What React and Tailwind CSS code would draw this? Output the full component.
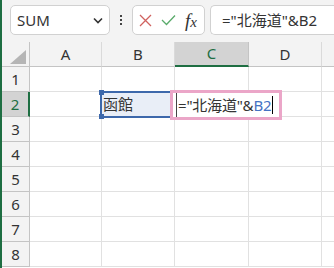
import React from "react";

const F = { fontFamily: '"Noto Sans", "Noto Sans CJK JP", sans-serif' };

function Toolbar() {
  return (
    <div className="h-[42px] flex items-start pt-[5px] bg-[#f3f3f3]">
      <div className="ml-[8px] w-[100px] h-[30px] bg-white border border-[#d1d1d1] rounded-[5px] flex items-center pl-[6px] pr-[6px] justify-between">
        <span className="text-[15px] text-[#333]">SUM</span>
        <svg width="10" height="7" viewBox="0 0 10 7"><path d="M1 1.5 L5 5.5 L9 1.5" fill="none" stroke="#333" strokeWidth="1.6" /></svg>
      </div>
      <div className="w-[22px] h-[30px] flex flex-col items-center justify-center gap-[2px]">
        <div className="w-[2px] h-[2px] bg-[#444]" />
        <div className="w-[2px] h-[2px] bg-[#444]" />
        <div className="w-[2px] h-[2px] bg-[#444]" />
      </div>
      <div className="w-[73px] h-[30px] bg-white border border-[#d1d1d1] rounded-[5px] flex items-center">
        <svg className="ml-[6px]" width="13" height="13" viewBox="0 0 13 13"><path d="M1 1 L12 12 M12 1 L1 12" stroke="#d0625f" strokeWidth="1.3" fill="none" /></svg>
        <svg className="ml-[9px]" width="15" height="12" viewBox="0 0 15 12"><path d="M1 6 L5.5 10.5 L14 1.5" stroke="#5aab6b" strokeWidth="1.3" fill="none" /></svg>
        <span className="ml-[9px] text-[19px] text-[#333] italic leading-none" style={{ fontFamily: '"Liberation Serif", serif' }}>
          f<span className="text-[15px]">x</span>
        </span>
      </div>
      <div className="ml-[5px] flex-1 h-[30px] bg-white border border-[#d1d1d1] border-r-0 rounded-l-[5px] flex items-center pl-[11px]">
        <span className="text-[15px] text-[#333] whitespace-nowrap">="北海道"&amp;B2</span>
      </div>
    </div>
  );
}

const cols = [
  { l: "A", w: 72 },
  { l: "B", w: 73 },
  { l: "C", w: 74, active: true },
  { l: "D", w: 73 },
  { l: "", w: 60 },
];

function App() {
  const rows = [1, 2, 3, 4, 5, 6, 7, 8];
  return (
    <div className="w-[334px] h-[268px] overflow-hidden bg-white border-l-2 border-[#1e6e42] relative" style={F}>
      <Toolbar />
      <div className="flex h-[25px] bg-[#f3f3f3]">
        <div className="w-[28px] shrink-0 border-r border-[#c4c4c4] border-b border-b-[#c4c4c4] relative">
          <svg className="absolute left-[8px] top-[8px]" width="16" height="14" viewBox="0 0 16 14"><path d="M16 0 L16 14 L0 14 Z" fill="#b5b5b5" /></svg>
        </div>
        {cols.map((c, i) => (
          <div
            key={i}
            style={{ width: c.w }}
            className={
              "shrink-0 flex items-center justify-center text-[15px] border-r " +
              (c.active
                ? "bg-[#d3d3d3] border-r-[#c4c4c4] border-b-2 border-b-[#1e6e42] text-[#1e6e42]"
                : "border-r-[#dadada] border-b border-b-[#c4c4c4] text-[#333]")
            }
          >
            {c.l}
          </div>
        ))}
      </div>
      {rows.map((r) => (
        <div key={r} className="flex h-[25px]">
          <div
            className={
              "w-[28px] shrink-0 flex items-center justify-center text-[15px] border-b border-b-[#c4c4c4] " +
              (r === 2
                ? "bg-[#d3d3d3] border-r-2 border-r-[#1e6e42] text-[#1e6e42]"
                : "bg-[#f3f3f3] border-r border-r-[#c4c4c4] text-[#333]")
            }
          >
            {r}
          </div>
          {cols.map((c, i) => (
            <div key={i} style={{ width: c.w }} className="shrink-0 border-r border-b border-[#e1e1e1]" />
          ))}
        </div>
      ))}
      {/* B2 selection */}
      <div className="absolute left-[98px] top-[91px] w-[72px] h-[27px] border-2 border-[#3d68ab] bg-[#e9eef7] flex items-center pl-[1px]">
        <span className="text-[15px] text-[#333]" style={{ fontFamily: '"Noto Sans CJK JP", sans-serif' }}>函館</span>
        <div className="absolute -left-[3px] -top-[3px] w-[5px] h-[5px] bg-[#3d68ab]" />
        <div className="absolute -left-[3px] -bottom-[3px] w-[5px] h-[5px] bg-[#3d68ab]" />
      </div>
      {/* C2 editor */}
      <div className="absolute left-[168px] top-[90px] w-[112px] h-[30px] border-[3px] border-[#eba6c8] bg-white flex items-center pl-[3px]">
        <div className="w-[1px] h-[24px] bg-[#444] mr-[1px]" />
        <span className="text-[15px] text-[#333] whitespace-nowrap tracking-[-0.2px]">
          ="北海道"&amp;<span className="text-[#4472c4]">B2</span>
        </span>
        <div className="w-[1px] h-[18px] bg-[#000] ml-[1px]" />
      </div>
    </div>
  );
}

export default App;
